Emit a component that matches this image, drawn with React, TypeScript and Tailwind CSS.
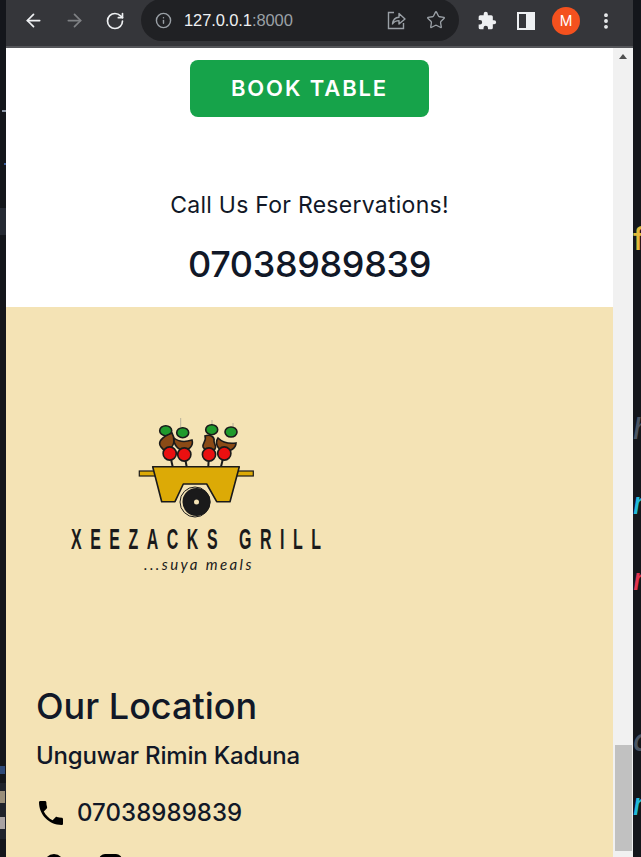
import React from 'react';
import { ArrowLeft, ArrowRight, RotateCw, Info, Star, MoreVertical } from 'lucide-react';

const sans = { fontFamily: 'Inter, sans-serif' };

const ShareIcon = () => (
  <svg width="20" height="20" viewBox="0 0 20 20" fill="none" stroke="#9aa0a6" strokeWidth="1.4">
    <path d="M8 2.5H2.5V18.5H17.5V13" />
    <path d="M6.5 14C7 9.5 10 7.5 13 7.3V3.5L19 9L13 14V10.6C10.5 10.6 8 11.5 6.5 14Z" strokeLinejoin="round" />
  </svg>
);

const PuzzleIcon = () => (
  <svg width="20" height="20" viewBox="0 0 24 24" fill="#eef0f2">
    <path d="M20.5 11H19V7a2 2 0 0 0-2-2h-4V3.5a2.5 2.5 0 0 0-5 0V5H4a2 2 0 0 0-2 2v3.8h1.5a2.7 2.7 0 0 1 0 5.4H2V20a2 2 0 0 0 2 2h3.8v-1.5a2.7 2.7 0 0 1 5.4 0V22H17a2 2 0 0 0 2-2v-4h1.5a2.5 2.5 0 0 0 0-5z" />
  </svg>
);

const SidePanelIcon = () => (
  <div className="w-[18px] h-[18px] border-[2px] border-[#eef0f2] flex justify-end">
    <div className="w-[7px] h-full bg-[#eef0f2]" />
  </div>
);

const PhoneIcon = () => (
  <svg width="32" height="32" viewBox="0 0 24 24" fill="#000">
    <path d="M6.62 10.79c1.44 2.83 3.76 5.14 6.59 6.59l2.2-2.2c.27-.27.67-.36 1.02-.24 1.12.37 2.33.57 3.57.57.55 0 1 .45 1 1V20c0 .55-.45 1-1 1-9.39 0-17-7.61-17-17 0-.55.45-1 1-1h3.5c.55 0 1 .45 1 1 0 1.25.2 2.45.57 3.57.11.35.03.74-.25 1.02l-2.2 2.2z" />
  </svg>
);

const skewers = [
  { leaf: [27.7, 14.7], meat: 'M23 31C19 26 24 21 34 17C37 22 37 30 31 33C28 35 25 34 23 31Z', ball: [31.7, 37.5], end: [34.7, 50.7], smoke: null },
  { leaf: [44.7, 16.7], meat: 'M36 22C41 26 48 26 54 24C56 30 50 35 45 34C40 34 35 28 36 22Z', ball: [46.3, 38.5], end: [48.7, 50.7], smoke: [42.7, 2, 11] },
  { leaf: [73.7, 13.7], meat: 'M67 20C72 18 77 21 76 25C76 28 79 30 77 33C73 36 67 35 65 31C64 27 69 25 67 20Z', ball: [71, 38.5], end: [70.3, 50.7], smoke: [74, 4, 9] },
  { leaf: [93, 16], meat: 'M80 22C84 26 90 28 98 27C98 32 92 36 87 35C81 35 76 28 80 22Z', ball: [86.3, 37.5], end: [83, 50.7], smoke: [95, 7, 11] },
];

const CartLogo = () => (
  <svg width="117" height="102" viewBox="0 0 117 102">
    {skewers.map((s, i) => (
      <g key={i}>
        {s.smoke && <line x1={s.smoke[0]} y1={s.smoke[1]} x2={s.smoke[0]} y2={s.smoke[2]} stroke="#b9b29c" strokeWidth="1" />}
        <line x1={s.ball[0]} y1={s.ball[1]} x2={s.end[0]} y2={s.end[1]} stroke="#1a1a1a" strokeWidth="2" />
        <ellipse cx={s.leaf[0]} cy={s.leaf[1]} rx="6" ry="5" fill="#1f9a2c" stroke="#1a1a1a" strokeWidth="1.6" />
        <path d={s.meat} fill="#8a4a16" stroke="#1a1a1a" strokeWidth="1.6" />
        <circle cx={s.ball[0]} cy={s.ball[1]} r="6.6" fill="#ea1010" stroke="#1a1a1a" strokeWidth="1.6" />
      </g>
    ))}
    <rect x="1.3" y="55" width="114" height="5" fill="#dcaa06" stroke="#1a1a1a" strokeWidth="1.2" />
    <path d="M14.7 50.7H101.3L92 85.7H78.7L68.7 68H45.3L37 85.7H23.7Z" fill="#dcaa06" stroke="#1a1a1a" strokeWidth="1.6" strokeLinejoin="round" />
    <circle cx="57" cy="86" r="15" fill="#f4e3b5" stroke="#1a1a1a" strokeWidth="1" />
    <circle cx="58.5" cy="86" r="14" fill="#1a1a1a" />
    <circle cx="58.5" cy="86" r="2.5" fill="#f4e3b5" />
  </svg>
);

const ghostLetters = [
  { ch: 'f', cls: 'top-[222px] text-[#e2b93b]' },
  { ch: 'h', cls: 'top-[411px] italic text-[#4b5563]' },
  { ch: 'n', cls: 'top-[486px] italic text-[#22b8d8]' },
  { ch: 'n', cls: 'top-[562px] italic text-[#e0344f]' },
  { ch: 'a', cls: 'top-[723px] italic text-[#4b5563]' },
  { ch: 'n', cls: 'top-[787px] italic text-[#22b8d8]' },
];

export default function App() {
  return (
    <div className="flex h-[857px] w-[641px] overflow-hidden bg-[#14161b]" style={sans}>
      {/* windows behind the browser, only a sliver shows */}
      <div className="w-[6px] shrink-0 relative overflow-hidden bg-[#14161b]">
        <div className="absolute left-0 top-[208px] w-full h-[27px] bg-[#262a33]" />
        <div className="absolute left-[2px] top-[110px] w-[4px] h-[2px] bg-[#8b95a5]" />
        <div className="absolute left-[4px] top-[163px] w-[2px] h-[2px] bg-[#3b5f9e]" />
        <div className="absolute left-0 top-[783px] w-full h-[56px] bg-[#1f232b]" />
        <div className="absolute left-0 top-[766px] w-[5px] h-[8px] bg-[#2f4a78]" />
        <div className="absolute left-0 top-[791px] w-[5px] h-[12px] bg-[#9a8f7a]" />
        <div className="absolute left-0 top-[817px] w-[5px] h-[12px] bg-[#a9a3a3]" />
      </div>
      <div className="w-[627px] flex flex-col shrink-0">
        <div className="h-[48px] shrink-0 bg-[#35363a] border-b-[2px] border-[#55565a] flex items-center text-[#eef0f2]">
          <div className="flex items-center ml-[17px] gap-[20px] mb-[5px]">
            <ArrowLeft size={21} strokeWidth={2} />
            <ArrowRight size={21} strokeWidth={2} className="text-[#7f8184]" />
            <RotateCw size={20} strokeWidth={2} />
          </div>
          <div className="ml-[16px] w-[318px] h-[42px] mb-[6px] rounded-full bg-[#202124] flex items-center pl-[14px] pr-[13px]">
            <Info size={17} className="text-[#9aa0a6]" />
            <span className="ml-[12px] text-[16.5px] tracking-[-0.1px]" style={{ fontFamily: '"Liberation Sans", sans-serif' }}>
              127.0.0.1<span className="text-[#9aa0a6]">:8000</span>
            </span>
            <div className="ml-auto flex items-center gap-[20px]">
              <ShareIcon />
              <Star size={20} strokeWidth={1.6} className="text-[#9aa0a6]" />
            </div>
          </div>
          <div className="flex items-center ml-[18px] mb-[5px]">
            <PuzzleIcon />
            <div className="ml-[20px]"><SidePanelIcon /></div>
            <div className="ml-[17px] w-7 h-7 rounded-full bg-[#f4511e] text-white text-[14px] flex items-center justify-center">M</div>
            <MoreVertical size={20} strokeWidth={2.6} className="ml-[16px]" />
          </div>
        </div>
        <div className="flex flex-1 min-h-0">
          <div className="w-[607px] overflow-hidden bg-white text-[#111827]">
            <div className="flex flex-col items-center h-[259px]">
              <div className="mt-[12px] w-[239px] h-[57px] rounded-lg bg-[#16a34a] text-white flex items-center justify-center text-[22px] font-semibold tracking-[1.9px]">
                BOOK TABLE
              </div>
              <p className="mt-[72px] text-[23px] leading-[32px] tracking-[0.26px]">Call Us For Reservations!</p>
              <p className="mt-[19px] text-[36px] leading-[48px] font-medium tracking-[-0.35px]">07038989839</p>
            </div>
            <div className="bg-[#f4e3b5] h-[550px] pl-[30px]">
              <div className="h-[357px] overflow-hidden">
                <div className="pt-[109px] pl-[102px]"><CartLogo /></div>
                <p className="mt-[4px] ml-[35px] w-[460px] origin-left scale-x-[0.55] text-[29px] leading-[34px] font-bold tracking-[15.5px] text-[#1a1a1a] whitespace-nowrap" style={{ fontFamily: '"Liberation Sans", sans-serif' }}>
                  XEEZACKS GRILL
                </p>
                <p className="ml-[108px] mt-[-1px] text-[15px] leading-[18px] italic tracking-[2.4px] text-[#1a1a1a]" style={{ fontFamily: 'Lato, sans-serif' }}>
                  ...suya meals
                </p>
              </div>
              <h2 className="mt-[20px] text-[36px] leading-[44px] font-medium">Our Location</h2>
              <p className="mt-[12px] text-[24px] leading-[32px] font-medium tracking-[-0.2px]">Unguwar Rimin Kaduna</p>
              <div className="mt-[25px] flex items-center gap-[10px] -ml-[1px]">
                <PhoneIcon />
                <span className="text-[24px] leading-[32px] font-medium tracking-[0.06px]">07038989839</span>
              </div>
              <div className="mt-[25px] flex items-start gap-[35px] ml-[8px]">
                <div className="w-[20px] h-[20px] rounded-full bg-black" />
                <div className="w-[23px] h-[23px] rounded-[6px] border-[3px] border-black" />
              </div>
            </div>
          </div>
          <div className="w-[20px] bg-[#f1f1f1] relative">
            <div className="h-[17px] flex items-center justify-center">
              <div className="w-0 h-0 border-x-[4.5px] border-x-transparent border-b-[5px] border-b-[#505050]" />
            </div>
            <div className="absolute left-[2px] right-[1px] top-[697px] h-[106px] bg-[#c1c1c1]" />
          </div>
        </div>
      </div>
      <div className="w-[8px] shrink-0 relative overflow-hidden bg-[#14161b]">
        {ghostLetters.map((l, i) => (
          <span key={i} className={`absolute left-0 text-[30px] leading-[34px] font-medium ${l.cls}`}>{l.ch}</span>
        ))}
      </div>
    </div>
  );
}
